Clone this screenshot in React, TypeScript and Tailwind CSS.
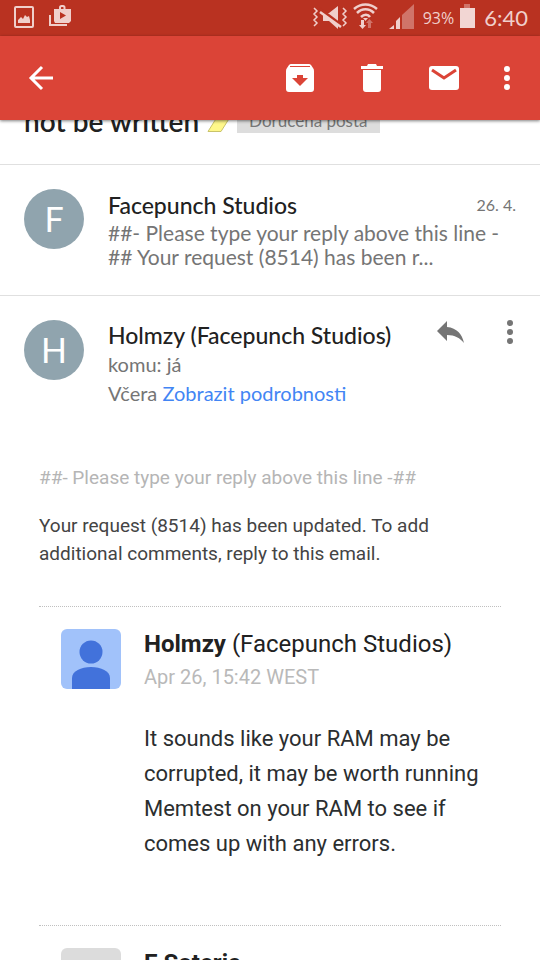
import type { ReactNode } from "react";

const hand = "font-['Lato','Open_Sans',sans-serif]";

function StatusBar() {
  return (
    <div className="flex h-9 shrink-0 items-center bg-[#b93221] pr-3 pl-3 text-[#f0cfcb]">
      <svg width="60" height="36" viewBox="0 0 60 36" aria-hidden="true">
        <rect x="3" y="7" width="18" height="20" rx="1" fill="none" stroke="currentColor" strokeWidth="2" />
        <path d="M6 23v-3l3-3 2 2 2-4 2 2 2-1 1 4v3z" fill="currentColor" />
        <path d="M38 15v10h17" fill="none" stroke="currentColor" strokeWidth="2" />
        <path d="M48 9V7.500a1.500 1.500 0 0 1 1.500-1.500h1.500a1.500 1.500 0 0 1 1.500 1.500V9" fill="none" stroke="currentColor" strokeWidth="2" />
        <path fillRule="evenodd" d="M42 9h17v12l-2 2H43l-1-2zM48 12v7l6-3.500z" fill="currentColor" />
      </svg>
      <svg className="ml-auto" width="104" height="36" viewBox="0 0 104 36" aria-hidden="true">
        <g fill="none" stroke="currentColor" strokeWidth="1.500">
          <path d="M3 8l3 3-3 3 3 3-3 3 3 3-3 3M32 8l3 3-3 3 3 3-3 3 3 3-3 3" />
        </g>
        <path d="M12 13h6l9-7v23l-9-8h-6z" fill="currentColor" />
        <path d="M9 9l21 16" stroke="#b93221" strokeWidth="3" />
        <path d="M9 12l21 15" stroke="currentColor" strokeWidth="2.500" />
        <g fill="none" stroke="currentColor" strokeWidth="2.500">
          <path d="M43 9c7-6 16-6 23 0M46 13c5-5 12-5 17 0M50 17c3-3 7-3 9 0" />
        </g>
        <path d="M52 18h5l-2.500 3z" fill="currentColor" />
        <path d="M50 20h3v5h2l-3.500 4-3.500-4h2z" fill="currentColor" />
        <path d="M57 28v-5h-2l3.500-4 3.500 4h-2v5z" fill="#d07469" />
        <path d="M78 29l5-4v4zM85 29v-8l4-4v12z" fill="currentColor" />
        <path d="M91 29V15L103 4v25z" fill="#d07469" />
      </svg>
      <span className="ml-2 font-['Open_Sans','Lato',sans-serif] text-base leading-9">93%</span>
      <svg className="ml-1" width="18" height="36" viewBox="0 0 18 36" aria-hidden="true">
        <path d="M6 4h6v4H6z" fill="#d07469" />
        <path d="M2 8h15v20H2z" fill="#f2d6d3" />
      </svg>
      <span className={`ml-2 text-[22px] leading-8 ${hand}`}>6:40</span>
    </div>
  );
}

function IconButton({ label, width, children }: { label: string; width: string; children: ReactNode }) {
  return (
    <button type="button" aria-label={label} className={`flex h-12 shrink-0 items-center justify-center ${width}`}>
      {children}
    </button>
  );
}

function AppBar() {
  return (
    <header className="z-10 flex h-[84px] shrink-0 items-center bg-[#db4437] pl-4 text-white shadow-[0_1px_3px_rgba(0,0,0,0.5)]">
      <IconButton label="Zpět" width="w-[50px]">
        <svg width="26" height="26" viewBox="0 0 26 26" fill="none" stroke="currentColor" strokeWidth="3">
          <path d="M25 13H4M14 2L3 13l11 11" />
        </svg>
      </IconButton>
      <div className="ml-auto flex">
        <IconButton label="Archivovat" width="w-[72px]">
          <svg width="28" height="28" viewBox="0 0 28 28">
            <path
              fillRule="evenodd"
              fill="currentColor"
              d="M5 0h18q1 0 2 1l2 3q1 1 1 3v18q0 3-3 3H3q-3 0-3-3V7q0-2 1-3l2-3q1-1 2-1zM4 3h20v-1H4zM11 11v3H6l8 8 8-8h-5v-3z"
            />
          </svg>
        </IconButton>
        <IconButton label="Smazat" width="w-[72px]">
          <svg width="22" height="28" viewBox="0 0 22 28" fill="currentColor">
            <path d="M0 2h6l1-2h8l1 2h6v3H0zM2 6h18v19q0 3-3 3H5q-3 0-3-3z" />
          </svg>
        </IconButton>
        <IconButton label="Označit jako nepřečtené" width="w-[72px]">
          <svg width="30" height="24" viewBox="0 0 30 24">
            <rect width="30" height="24" rx="3" fill="currentColor" />
            <path d="M3 4l12 8 12-8" fill="none" stroke="#db4437" strokeWidth="3" />
          </svg>
        </IconButton>
        <IconButton label="Další možnosti" width="w-[54px]">
          <svg width="6" height="24" viewBox="0 0 6 24" fill="currentColor">
            <circle cx="3" cy="3" r="3" />
            <circle cx="3" cy="12" r="3" />
            <circle cx="3" cy="21" r="3" />
          </svg>
        </IconButton>
        <span className="w-1.5" />
      </div>
    </header>
  );
}

function Avatar({ letter }: { letter: string }) {
  return (
    <div className="flex size-15 shrink-0 items-center justify-center rounded-full bg-[#90a4ae] text-[34px] leading-none text-white">
      {letter}
    </div>
  );
}

function Person({ shade, figure }: { shade: string; figure: string }) {
  return (
    <svg className="shrink-0" width="60" height="60" viewBox="0 0 60 60" aria-hidden="true">
      <rect width="60" height="60" rx="6" fill={shade} />
      <circle cx="30" cy="23" r="11.500" fill={figure} />
      <path d="M11 60V49c0-7 9-11 19-11s19 4 19 11v11z" fill={figure} />
    </svg>
  );
}

export default function App() {
  return (
    <div className={`flex h-screen flex-col overflow-hidden bg-white text-[#212121] ${hand}`}>
      <StatusBar />
      <AppBar />
      <main className="min-h-0 flex-1 overflow-hidden">
        <div className="flex h-[45px] items-end overflow-hidden border-b border-[#e0e0e0] pb-[31px] pl-6">
          <h1 className="-mb-1 text-[28px] leading-8 font-semibold whitespace-nowrap">not be written</h1>
          <svg className="ml-2 shrink-0" width="26" height="20" viewBox="0 0 26 20" aria-hidden="true">
            <path d="M1 18.500L12 1h13L14 18.500z" fill="#fff88a" stroke="#c9c36a" />
          </svg>
          <span className="ml-1 bg-[#dddddd] px-3 text-[17px] leading-6 whitespace-nowrap text-[#777777]">
            Doručená pošta
          </span>
        </div>

        <section className="flex h-[131px] gap-6 border-b border-[#e0e0e0] px-6 pt-6">
          <Avatar letter="F" />
          <div className="min-w-0 flex-1">
            <div className="flex h-8 items-center justify-between">
              <h2 className="text-[23px] leading-7 font-medium">Facepunch Studios</h2>
              <time className="text-base leading-7 text-[#757575]">26. 4.</time>
            </div>
            <p className="text-[21px] leading-6 whitespace-nowrap text-[#757575]">
              ##- Please type your reply above this line -
              <br />
              ## Your request (8514) has been r...
            </p>
          </div>
        </section>

        <section className="flex gap-6 pt-6 pl-6">
          <Avatar letter="H" />
          <div className="min-w-0 flex-1 whitespace-nowrap">
            <h2 className="text-[23px] leading-[30px] font-medium">Holmzy (Facepunch Studios)</h2>
            <p className="text-xl leading-[29px] text-[#757575]">
              komu: já
              <br />
              Včera{" "}
              <a href="#podrobnosti" className="text-[#4285f4]">
                Zobrazit podrobnosti
              </a>
            </p>
          </div>
          <div className="-mt-3 flex text-[#757575]">
            <IconButton label="Odpovědět" width="w-[60px]">
              <svg width="27" height="22" viewBox="0 0 27 22" fill="currentColor">
                <path d="M0 10L10 0v6c10 1 15 7 17 16-4-5-9-8-17-8v6z" />
              </svg>
            </IconButton>
            <IconButton label="Další" width="w-[60px]">
              <svg width="6" height="24" viewBox="0 0 6 24" fill="currentColor">
                <circle cx="3" cy="3" r="3" />
                <circle cx="3" cy="12" r="3" />
                <circle cx="3" cy="21" r="3" />
              </svg>
            </IconButton>
          </div>
        </section>

        <article className="mx-[39px] pt-14 font-['Roboto',sans-serif]">
          <p className="text-[19px] leading-7 text-[#b5b5b5]">##- Please type your reply above this line -##</p>
          <p className="mt-5 text-[19px] leading-7 text-[#444444]">
            Your request (8514) has been updated. To add additional comments, reply to this email.
          </p>
          <section className="mt-[38px] flex h-[319px] gap-[23px] border-t border-dotted border-[#c0c0c0] pt-[22px] pl-[22px]">
            <Person shade="#a1c2fa" figure="#4272db" />
            <div className="min-w-0 flex-1">
              <h3 className="text-2xl leading-[30px] font-normal whitespace-nowrap">
                <strong>Holmzy</strong> (Facepunch Studios)
              </h3>
              <p className="pt-0.5 text-xl leading-8 text-[#b9b9b9]">Apr 26, 15:42 WEST</p>
              <p className="mt-7 text-[22px] leading-[35px] text-[#2b2e2f]">
                It sounds like your RAM may be corrupted, it may be worth running Memtest on your RAM to see if comes up
                with any errors.
              </p>
            </div>
          </section>
          <section className="flex gap-[23px] border-t border-dotted border-[#c0c0c0] pt-[22px] pl-[22px]">
            <Person shade="#dcdcdc" figure="#dcdcdc" />
            <h3 className="text-2xl leading-[30px] font-bold">E Soteric</h3>
          </section>
        </article>
      </main>
    </div>
  );
}
